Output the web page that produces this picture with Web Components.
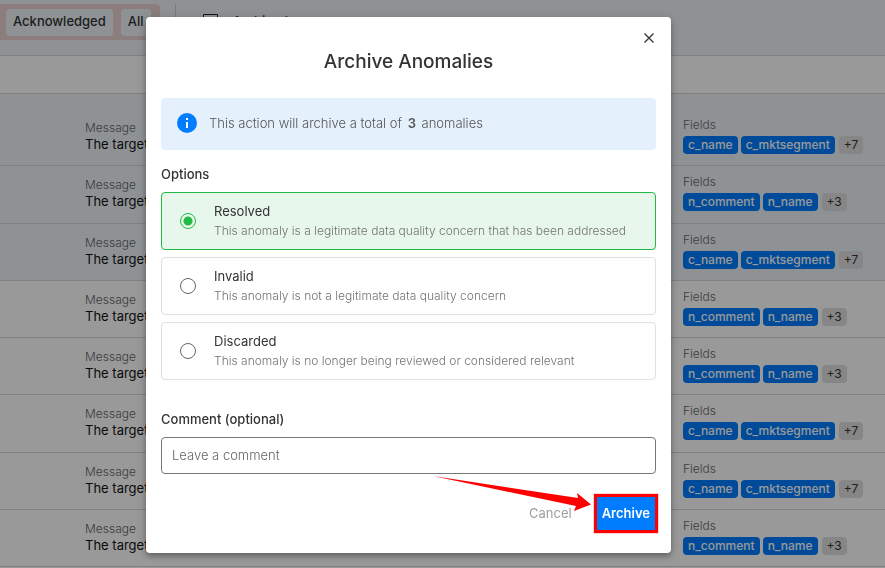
<!DOCTYPE html>
<html lang="en">
<head>
<meta charset="UTF-8">
<meta name="viewport" content="width=device-width, initial-scale=1">
<title>Anomalies</title>
<style>
    html, body { height: 100%; }
    body {
        margin: 0; overflow: hidden; display: flex; flex-direction: column;
        box-sizing: border-box; padding-bottom: 1px;
        font-family: Inter, "Liberation Sans", sans-serif; font-size: 13px; line-height: 20px;
        color: #333; background: #fff;
        --blue: #007dff; --green: #21ba45; --tint: #edf4f9; --line: #d4d7da;
    }
    anomaly-list { flex: 1; }
    anomaly-row { flex: 1; }
</style>
</head>
<body>
<anomaly-toolbar></anomaly-toolbar>
<anomaly-list>
    <anomaly-row selected fields="c_name,c_mktsegment" more="7">The target</anomaly-row>
    <anomaly-row selected fields="n_comment,n_name" more="3">The target</anomaly-row>
    <anomaly-row selected fields="c_name,c_mktsegment" more="7">The target</anomaly-row>
    <anomaly-row fields="n_comment,n_name" more="3">The target</anomaly-row>
    <anomaly-row fields="n_comment,n_name" more="3">The target</anomaly-row>
    <anomaly-row fields="c_name,c_mktsegment" more="7">The target</anomaly-row>
    <anomaly-row fields="c_name,c_mktsegment" more="7">The target</anomaly-row>
    <anomaly-row fields="n_comment,n_name" more="3">The target</anomaly-row>
</anomaly-list>
<modal-dialog heading="Archive Anomalies">
    <info-banner>This action will archive a total of <b>3</b> anomalies</info-banner>
    <archive-options></archive-options>
    <comment-field></comment-field>
    <dialog-actions></dialog-actions>
</modal-dialog>

<script>
class AnomalyToolbar extends HTMLElement {
    constructor() {
        super();
        this.attachShadow({ mode: 'open' });
    }

    connectedCallback() {
        this.shadowRoot.innerHTML = `
            <style>
                :host { display: block; }
                .filters {
                    display: flex; height: 51px; padding-top: 4px;
                    background: var(--tint); border-bottom: 1px solid var(--line);
                }
                .group {
                    display: flex; gap: 8px; align-items: center; height: 36px;
                    padding: 0 9px 0 6px; box-sizing: border-box; background: #e8d3d1; border-radius: 0 4px 4px 0;
                }
                .group button {
                    height: 27px; padding: 0 7px 2px; border: 0; border-radius: 4px;
                    background: var(--tint); font: inherit; font-weight: 500; color: #333;
                }
                .sep { width: 1px; height: 36px; margin: 0 27px 0 15px; background: #c8ccd0; }
                .archived {
                    display: flex; gap: 15px; align-items: center; height: 36px; padding: 0 0 2px;
                    border: 0; background: none; font: inherit; font-weight: 500; color: #333;
                }
                .band { height: 37px; background: #fff; border-bottom: 1px solid var(--line); }
                .space { height: 15px; background: var(--tint); }
            </style>
            <div class="filters">
                <div class="group">
                    <button type="button">Acknowledged</button>
                    <button type="button">All</button>
                </div>
                <div class="sep"></div>
                <button class="archived" type="button">
                    <svg width="15" height="14" viewBox="0 0 15 14" fill="none" stroke="#222"><path d="M.5.5h14v13H.5zM.5 4.500h14"/></svg>
                    Archived
                </button>
            </div>
            <div class="band"></div>
            <div class="space"></div>
        `;
    }
}
customElements.define('anomaly-toolbar', AnomalyToolbar);

class AnomalyList extends HTMLElement {
    constructor() {
        super();
        this.attachShadow({ mode: 'open' });
        this.shadowRoot.innerHTML = `
            <style>:host { display: flex; flex-direction: column; }</style>
            <slot></slot>
        `;
    }
}
customElements.define('anomaly-list', AnomalyList);

class AnomalyRow extends HTMLElement {
    constructor() {
        super();
        this.attachShadow({ mode: 'open' });
    }

    connectedCallback() {
        const chips = this.getAttribute('fields').split(',').map(f => `<span class="chip">${f}</span>`).join('');
        this.shadowRoot.innerHTML = `
            <style>
                :host {
                    display: flex; justify-content: space-between;
                    padding-left: 85px; border-bottom: 1px solid var(--line); background: #fff;
                }
                :host([selected]) { background: var(--tint); }
                .label { font-size: 12px; line-height: 16px; font-weight: 300; color: #666; }
                .message { padding-top: 11px; color: #111; line-height: 17px; }
                .fields { width: 202px; padding-top: 8px; }
                .chips { display: flex; gap: 3px; padding-top: 3px; }
                .chip {
                    padding: 0 5px; border-radius: 4px; background: var(--blue); color: #fff;
                    font-size: 12px; line-height: 18px; font-weight: 500;
                }
                .more { margin-left: 1px; background: #e0e0e0; color: #333; font-weight: 400; }
            </style>
            <div class="message"><div class="label">Message</div><slot></slot></div>
            <div class="fields">
                <div class="label">Fields</div>
                <div class="chips">${chips}<span class="chip more">+${this.getAttribute('more')}</span></div>
            </div>
        `;
    }
}
customElements.define('anomaly-row', AnomalyRow);

class ModalDialog extends HTMLElement {
    constructor() {
        super();
        this.attachShadow({ mode: 'open' });
    }

    connectedCallback() {
        const heading = this.getAttribute('heading') || '';
        this.shadowRoot.innerHTML = `
            <style>
                :host {
                    position: fixed; inset: 0; box-sizing: border-box;
                    display: flex; align-items: flex-start; justify-content: center;
                    padding: 17px 68px 0 0; background: rgba(0, 0, 0, 0.4);
                }
                .card {
                    position: relative; box-sizing: border-box; width: min(100%, 525px);
                    padding: 12px 15px 20px; background: #fff; border-radius: 4px;
                    box-shadow: 0 3px 5px rgba(0,0,0,0.25), 0 2px 12px rgba(0,0,0,0.2);
                }
                header { display: flex; flex-direction: column; }
                .close {
                    align-self: flex-end; display: flex; width: 18px; height: 18px; padding: 0;
                    margin-right: -2px; border: 0; background: none; align-items: center; justify-content: center;
                }
                h1 { margin: 2px 0 24px; font-size: 19px; line-height: 25px; font-weight: 500; text-align: center; color: #333; }
                .arrow { position: absolute; right: 80px; bottom: 41px; }
            </style>
            <section class="card" role="dialog" aria-modal="true" aria-labelledby="title">
                <header>
                    <button class="close" id="close-btn" type="button" aria-label="Close">
                        <svg width="10" height="10" viewBox="0 0 10 10" stroke="#333" stroke-width="1.3"><path d="M.5.5l9 9M9.5.5l-9 9"/></svg>
                    </button>
                    <h1 id="title">${heading}</h1>
                </header>
                <slot></slot>
                <svg class="arrow" width="158" height="36" viewBox="0 0 158 36" fill="#f00"><path d="M0 0L145 22 144 17 158 28.500 141 35 143 30Z"/></svg>
            </section>
        `;

        this.shadowRoot.getElementById('close-btn').addEventListener('click', () => {
            this.remove();
        });
    }
}
customElements.define('modal-dialog', ModalDialog);

class InfoBanner extends HTMLElement {
    constructor() {
        super();
        this.attachShadow({ mode: 'open' });
        this.shadowRoot.innerHTML = `
            <style>
                :host {
                    display: flex; align-items: center; gap: 12px; box-sizing: border-box; height: 52px;
                    padding: 0 16px 2px; border-radius: 4px; background: #e4f0fc; color: #555; font-weight: 300;
                }
                ::slotted(b) { margin: 0 2px; font-weight: 600; color: #555; }
            </style>
            <svg width="20" height="20" viewBox="0 0 20 20"><circle cx="10" cy="10" r="10" fill="#007dff"/><path d="M9 5h2v2H9zM9 9h2v6H9z" fill="#fff"/></svg>
            <span><slot></slot></span>
        `;
    }
}
customElements.define('info-banner', InfoBanner);

// All radios share one shadow root so that the browser groups them
class ArchiveOptions extends HTMLElement {
    constructor() {
        super();
        this.attachShadow({ mode: 'open' });
        this.options = [
            ['Resolved', 'This anomaly is a legitimate data quality concern that has been addressed'],
            ['Invalid', 'This anomaly is not a legitimate data quality concern'],
            ['Discarded', 'This anomaly is no longer being reviewed or considered relevant']
        ];
    }

    connectedCallback() {
        this.shadowRoot.innerHTML = `
            <style>
                :host { display: block; padding-top: 14px; }
                fieldset { display: flex; flex-direction: column; gap: 7px; margin: 0; padding: 0; border: 0; }
                legend { padding: 0 0 8px; font-weight: 500; }
                label {
                    display: flex; align-items: center; gap: 18px; box-sizing: border-box;
                    height: 58px; padding: 0 18px; border: 1px solid #e0e0e0; border-radius: 4px;
                }
                label:has(:checked) { background: #e8f7ec; border-color: var(--green); }
                input {
                    appearance: none; flex: none; width: 16px; height: 16px; margin: 0;
                    border: 1px solid #666; border-radius: 50%; box-sizing: border-box; outline: 0;
                }
                input:checked { border-color: var(--green); background: radial-gradient(circle, var(--green) 4px, transparent 5px); }
                .name { display: block; line-height: 18px; padding-bottom: 2px; color: #333; }
                .hint { display: block; font-size: 12px; line-height: 18px; font-weight: 300; color: #737373; }
            </style>
            <fieldset>
                <legend>Options</legend>
                ${this.options.map(([name, hint], i) => `
                <label>
                    <input type="radio" name="status" value="${name.toLowerCase()}" ${i === 0 ? 'checked' : ''}>
                    <span><span class="name">${name}</span><span class="hint">${hint}</span></span>
                </label>`).join('')}
            </fieldset>
        `;
    }
}
customElements.define('archive-options', ArchiveOptions);

class CommentField extends HTMLElement {
    constructor() {
        super();
        this.attachShadow({ mode: 'open' });
        this.shadowRoot.innerHTML = `
            <style>
                :host { display: flex; flex-direction: column; gap: 8px; padding-top: 29px; }
                label { font-weight: 500; }
                input {
                    box-sizing: border-box; width: 100%; height: 37px; padding: 0 10px 2px;
                    border: 1px solid #777; border-radius: 4px; background: #fff; font: inherit; color: #333;
                }
                input::placeholder { color: #666; opacity: 1; font-weight: 300; }
            </style>
            <label for="comment">Comment (optional)</label>
            <input id="comment" type="text" placeholder="Leave a comment">
        `;
    }
}
customElements.define('comment-field', CommentField);

class DialogActions extends HTMLElement {
    constructor() {
        super();
        this.attachShadow({ mode: 'open' });
        this.shadowRoot.innerHTML = `
            <style>
                :host { display: flex; justify-content: flex-end; gap: 16px; padding-top: 20px; margin-right: -2px; }
                button { height: 39px; padding: 0 6px 2px; border: 0; background: none; font: inherit; color: #9e9e9e; }
                .primary {
                    padding: 0 5px 2px; border: 3px solid #f00; background: var(--blue);
                    color: #fff; font-weight: 600; box-shadow: 0 0 1px #f00;
                }
            </style>
            <button type="button">Cancel</button>
            <button class="primary" type="button">Archive</button>
        `;
    }
}
customElements.define('dialog-actions', DialogActions);
</script>
</body>
</html>
